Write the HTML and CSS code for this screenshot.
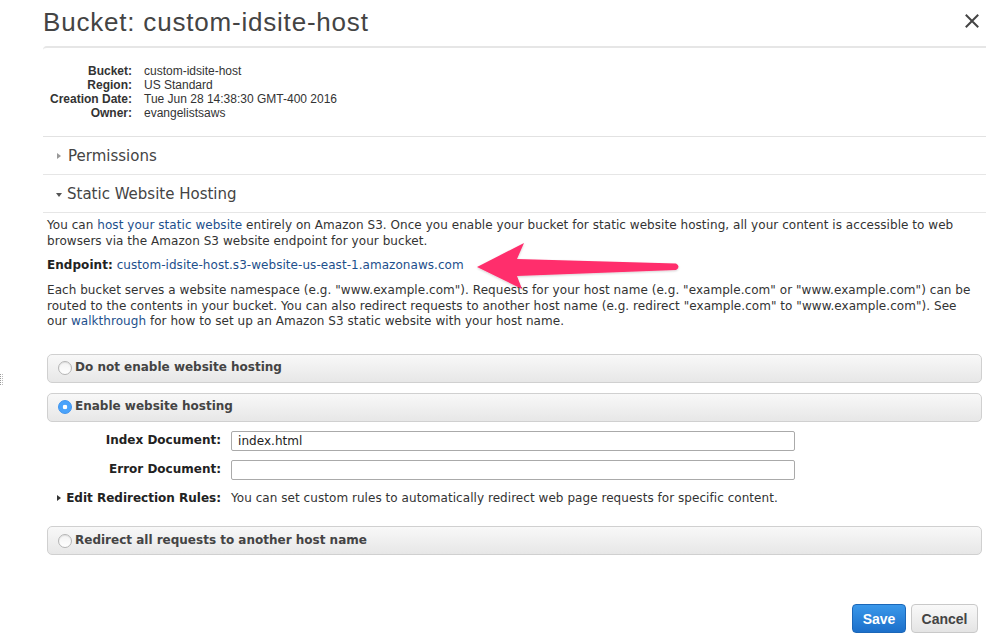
FILE: index.html
```html
<!DOCTYPE html>
<html lang="en">
<head>
<meta charset="utf-8">
<title>Bucket: custom-idsite-host</title>
<link rel="stylesheet" href="styles.css">
</head>
<body>
<div class="edge-mark"></div>
<div class="modal">
  <header class="modal-head">
    <h1 class="title">Bucket: custom-idsite-host</h1>
    <button class="close" aria-label="Close">
      <svg width="14" height="14" viewBox="0 0 14 14"><path d="M1.5 1.5 L12.5 12.5 M12.5 1.5 L1.5 12.5" stroke="#444" stroke-width="2" stroke-linecap="square" fill="none"/></svg>
    </button>
  </header>

  <div class="details">
    <div class="meta">
      <span class="meta-label">Bucket:</span><span class="meta-value">custom-idsite-host</span>
      <span class="meta-label">Region:</span><span class="meta-value">US Standard</span>
      <span class="meta-label">Creation Date:</span><span class="meta-value">Tue Jun 28 14:38:30 GMT-400 2016</span>
      <span class="meta-label">Owner:</span><span class="meta-value">evangelistsaws</span>
    </div>
  </div>

  <div class="section"><span class="caret-right"></span>Permissions</div>
  <div class="section"><span class="caret-down"></span>Static Website Hosting</div>

  <div class="hosting">
    <p class="p1">You can <a href="#">host your static website</a> entirely on Amazon S3. Once you enable your bucket for static website hosting, all your content is accessible to web browsers via the Amazon S3 website endpoint for your bucket.</p>
    <p class="endpoint"><b>Endpoint:</b> <a href="#">custom-idsite-host.s3-website-us-east-1.amazonaws.com</a></p>
    <p class="p2">Each bucket serves a website namespace (e.g. "www.example.com"). Requests for your host name (e.g. "example.com" or "www.example.com") can be routed to the contents in your bucket. You can also redirect requests to another host name (e.g. redirect "example.com" to "www.example.com"). See our <a href="#">walkthrough</a> for how to set up an Amazon S3 static website with your host name.</p>

    <div class="opt"><span class="radio"></span><span class="opt-label">Do not enable website hosting</span></div>
    <div class="opt opt-gap"><span class="radio radio-on"></span><span class="opt-label">Enable website hosting</span></div>

    <div class="form">
      <span class="f-label">Index Document:</span>
      <div class="input">index.html</div>
      <span class="f-label">Error Document:</span>
      <div class="input"></div>
      <span class="f-label f-redirect"><span class="caret-right dark"></span>Edit Redirection Rules:</span>
      <span class="f-text">You can set custom rules to automatically redirect web page requests for specific content.</span>
    </div>

    <div class="opt"><span class="radio"></span><span class="opt-label">Redirect all requests to another host name</span></div>
  </div>

  <div class="actions">
    <button class="btn btn-save">Save</button>
    <button class="btn btn-cancel">Cancel</button>
  </div>
</div>

<svg class="arrow" width="220" height="60" viewBox="470 235 220 60">
  <defs>
    <filter id="sh" x="-10%" y="-20%" width="120%" height="150%">
      <feDropShadow dx="0" dy="1" stdDeviation="1" flood-color="#000" flood-opacity="0.18"/>
    </filter>
  </defs>
  <path d="M477 267 L524 243 L517 259 L676 263.5 Q681 266.5 676 270 L517 276 L522 289 Z" fill="#ff2e6c" filter="url(#sh)"/>
</svg>
</body>
</html>
```

FILE: styles.css
```css
* { box-sizing: border-box; }

html, body {
  margin: 0;
  padding: 0;
  background: #fff;
}

body {
  width: 996px;
  height: 639px;
  position: relative;
  overflow: hidden;
  font-family: "DejaVu Sans", Verdana, sans-serif;
  color: #333;
}

.edge-mark {
  position: absolute;
  left: 0;
  top: 374px;
  width: 3px;
  height: 11px;
  border-left: 1px dotted #999;
  border-right: 1px dotted #bbb;
}

.modal {
  padding: 0 10px 0 43px;
}

/* Header */
.modal-head {
  height: 46px;
  display: flex;
  align-items: center;
  justify-content: space-between;
}

.title {
  margin: 0;
  font-family: "Liberation Sans", Arial, sans-serif;
  font-weight: normal;
  font-size: 26px;
  letter-spacing: 0.8px;
  line-height: 40px;
  color: #444;
  padding-top: 1px;
  padding-bottom: 3px;
}

.close {
  border: 0;
  background: none;
  padding: 0;
  margin: 0 7px 4px 0;
  width: 14px;
  height: 14px;
  display: block;
}
.close svg { display: block; }

/* Details */
.details {
  border-top: 2px solid #e6e6e6;
  border-top-left-radius: 4px;
  border-bottom: 1px solid #e2e2e2;
  padding: 16px 0 16px 7px;
}

.meta {
  display: grid;
  grid-template-columns: 82px auto;
  column-gap: 12px;
  font-family: "Liberation Sans", Arial, sans-serif;
  font-size: 12px;
  line-height: 14px;
}

.meta-label {
  text-align: right;
  font-weight: bold;
  color: #333;
}

.meta-value { color: #333; }

/* Collapsible sections */
.section {
  height: 38px;
  display: flex;
  align-items: center;
  padding-left: 14px;
  padding-top: 1px;
  font-size: 15px;
  color: #444;
  border-bottom: 1px solid #e6e6e6;
}

.caret-right {
  display: inline-block;
  width: 0;
  height: 0;
  border-left: 4px solid #999;
  border-top: 3.5px solid transparent;
  border-bottom: 3.5px solid transparent;
  margin-right: 7px;
}
.caret-right.dark { border-left-color: #333; }

.caret-down {
  display: inline-block;
  width: 0;
  height: 0;
  border-top: 4px solid #555;
  border-left: 3.5px solid transparent;
  border-right: 3.5px solid transparent;
  margin: 1px 5px 0 -1px;
}

/* Hosting body */
.hosting {
  padding: 5px 4px 0;
  font-size: 12px;
  line-height: 15.5px;
  letter-spacing: 0.05px;
  color: #333;
}

.hosting p { margin: 0; padding-right: 6px; }
.hosting a { color: #1d4f8c; text-decoration: none; }
.hosting b { color: #222; }

.p1 { margin-bottom: 9px !important; }
.endpoint { margin-bottom: 9.5px !important; }
.p2 { margin-bottom: 24px !important; }

.opt {
  height: 29px;
  display: flex;
  align-items: center;
  padding-left: 10px;
  border: 1px solid #d0d0d0;
  border-radius: 5px;
  background: linear-gradient(#f8f8f8, #e7e7e7);
}
.opt-gap { margin-top: 10px; }

.radio {
  width: 14px;
  height: 14px;
  border-radius: 50%;
  border: 1px solid #b5b5b5;
  background: linear-gradient(#f2f2f2, #fff);
  box-shadow: inset 0 1px 1px rgba(0,0,0,0.08);
  flex: none;
}

.radio-on {
  border-color: #3d93ee;
  background: radial-gradient(circle, #fff 0 2px, #4aa3fb 2.6px);
  box-shadow: none;
}

.opt-label {
  margin-left: 3px;
  font-weight: bold;
  font-size: 12px;
  letter-spacing: 0;
  color: #444;
}

/* Form */
.form {
  display: grid;
  grid-template-columns: 174px 564px;
  column-gap: 10px;
  row-gap: 9px;
  align-items: center;
  padding: 9px 0 20px;
}

.f-label {
  justify-self: end;
  font-weight: bold;
  letter-spacing: 0;
  color: #222;
}

.f-redirect {
  justify-self: stretch;
  display: flex;
  align-items: center;
  padding-left: 10px;
  margin-top: 2px;
}
.f-redirect .caret-right { margin-right: auto; }

.f-text {
  grid-column: 2;
  white-space: nowrap;
  margin-top: 2px;
  color: #333;
}

.input {
  height: 20px;
  border: 1px solid #aaa;
  border-radius: 2px;
  background: #fff;
  padding-left: 6px;
  line-height: 18px;
  font-size: 12px;
  color: #222;
}

/* Actions */
.actions {
  display: flex;
  justify-content: flex-end;
  gap: 5px;
  margin-top: 49px;
  padding-right: 8px;
}

.btn {
  height: 29px;
  border-radius: 4px;
  font-family: "Liberation Sans", Arial, sans-serif;
  font-weight: bold;
  font-size: 14px;
  padding: 0;
  cursor: pointer;
}

.btn-save {
  width: 54px;
  color: #fff;
  border: 1px solid #1b67b8;
  background: linear-gradient(#3a98ea, #1c6fca);
}

.btn-cancel {
  width: 67px;
  color: #444;
  border: 1px solid #c9c9c9;
  background: linear-gradient(#f9f9f9, #e4e4e4);
}

/* Annotation arrow */
.arrow {
  position: absolute;
  left: 470px;
  top: 235px;
  overflow: visible;
}
```
